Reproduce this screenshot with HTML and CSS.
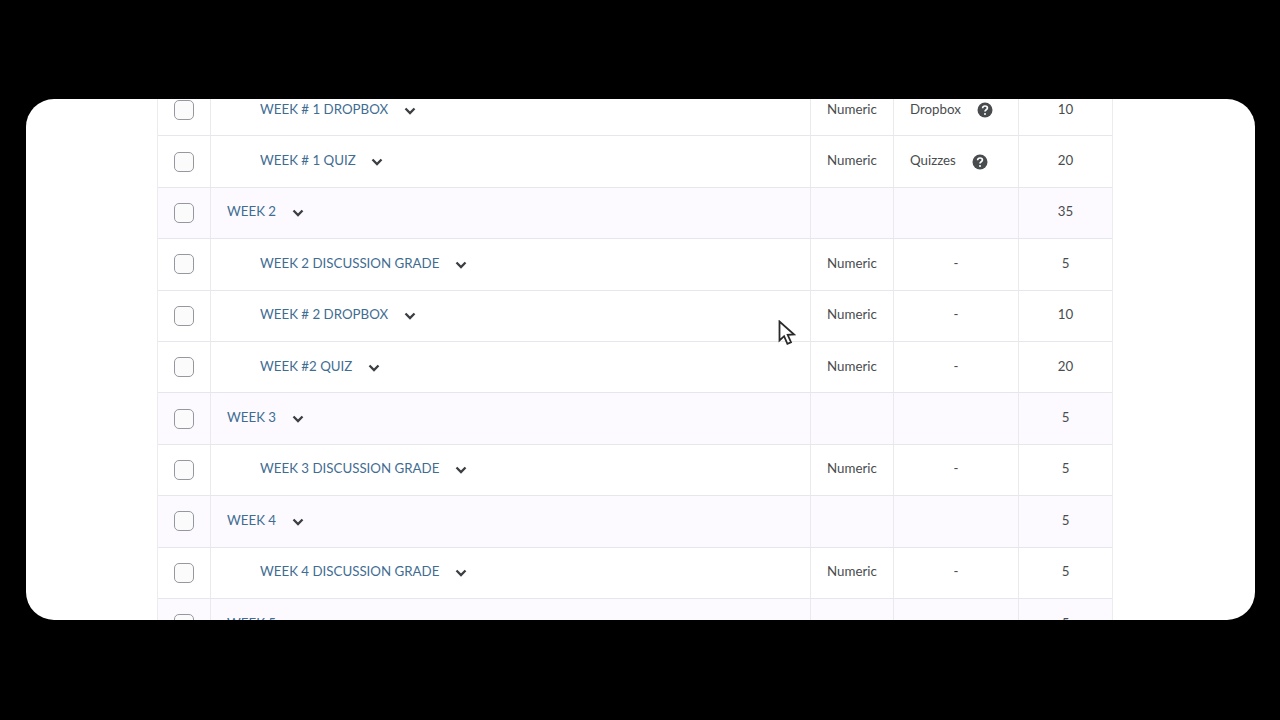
FILE: index.html
```html
<!DOCTYPE html>
<html lang="en">
<head>
<meta charset="utf-8">
<title>Grade items</title>
<link rel="stylesheet" href="styles.css">
</head>
<body>
<main class="card">
  <div class="table">
    <div class="row"><div class="c check"><span class="box"></span></div><div class="c name child"><a>WEEK # 1 DROPBOX</a><svg class="chev" viewBox="0 0 12 8"><path d="M1.5 1.5 6 6l4.5-4.5"/></svg></div><div class="c type">Numeric</div><div class="c cat"><span>Dropbox</span><svg class="help" viewBox="0 0 16 16"><circle cx="8" cy="8" r="7.5"/><path class="q" d="M5.6 6.2C5.7 4.8 6.7 4 8 4c1.4 0 2.4.9 2.4 2 0 1.8-2.4 1.8-2.4 3.6"/><circle class="dot" cx="8" cy="12" r="1"/></svg></div><div class="c max">10</div></div>
    <div class="row"><div class="c check"><span class="box"></span></div><div class="c name child"><a>WEEK # 1 QUIZ</a><svg class="chev" viewBox="0 0 12 8"><path d="M1.5 1.5 6 6l4.5-4.5"/></svg></div><div class="c type">Numeric</div><div class="c cat"><span>Quizzes</span><svg class="help" viewBox="0 0 16 16"><circle cx="8" cy="8" r="7.5"/><path class="q" d="M5.6 6.2C5.7 4.8 6.7 4 8 4c1.4 0 2.4.9 2.4 2 0 1.8-2.4 1.8-2.4 3.6"/><circle class="dot" cx="8" cy="12" r="1"/></svg></div><div class="c max">20</div></div>
    <div class="row group"><div class="c check"><span class="box"></span></div><div class="c name"><a>WEEK 2</a><svg class="chev" viewBox="0 0 12 8"><path d="M1.5 1.5 6 6l4.5-4.5"/></svg></div><div class="c type"></div><div class="c cat"></div><div class="c max">35</div></div>
    <div class="row"><div class="c check"><span class="box"></span></div><div class="c name child"><a>WEEK 2 DISCUSSION GRADE</a><svg class="chev" viewBox="0 0 12 8"><path d="M1.5 1.5 6 6l4.5-4.5"/></svg></div><div class="c type">Numeric</div><div class="c cat dash">-</div><div class="c max">5</div></div>
    <div class="row"><div class="c check"><span class="box"></span></div><div class="c name child"><a>WEEK # 2 DROPBOX</a><svg class="chev" viewBox="0 0 12 8"><path d="M1.5 1.5 6 6l4.5-4.5"/></svg></div><div class="c type">Numeric</div><div class="c cat dash">-</div><div class="c max">10</div></div>
    <div class="row"><div class="c check"><span class="box"></span></div><div class="c name child"><a>WEEK #2 QUIZ</a><svg class="chev" viewBox="0 0 12 8"><path d="M1.5 1.5 6 6l4.5-4.5"/></svg></div><div class="c type">Numeric</div><div class="c cat dash">-</div><div class="c max">20</div></div>
    <div class="row group"><div class="c check"><span class="box"></span></div><div class="c name"><a>WEEK 3</a><svg class="chev" viewBox="0 0 12 8"><path d="M1.5 1.5 6 6l4.5-4.5"/></svg></div><div class="c type"></div><div class="c cat"></div><div class="c max">5</div></div>
    <div class="row"><div class="c check"><span class="box"></span></div><div class="c name child"><a>WEEK 3 DISCUSSION GRADE</a><svg class="chev" viewBox="0 0 12 8"><path d="M1.5 1.5 6 6l4.5-4.5"/></svg></div><div class="c type">Numeric</div><div class="c cat dash">-</div><div class="c max">5</div></div>
    <div class="row group"><div class="c check"><span class="box"></span></div><div class="c name"><a>WEEK 4</a><svg class="chev" viewBox="0 0 12 8"><path d="M1.5 1.5 6 6l4.5-4.5"/></svg></div><div class="c type"></div><div class="c cat"></div><div class="c max">5</div></div>
    <div class="row"><div class="c check"><span class="box"></span></div><div class="c name child"><a>WEEK 4 DISCUSSION GRADE</a><svg class="chev" viewBox="0 0 12 8"><path d="M1.5 1.5 6 6l4.5-4.5"/></svg></div><div class="c type">Numeric</div><div class="c cat dash">-</div><div class="c max">5</div></div>
    <div class="row group"><div class="c check"><span class="box"></span></div><div class="c name"><a>WEEK 5</a></div><div class="c type"></div><div class="c cat"></div><div class="c max">5</div></div>
  </div>
  <svg class="cursor" viewBox="0 0 18 26"><path d="M1.5 1.5v19l4.6-4.3 3.3 7.6 3.6-1.6-3.3-7.4 6.2-.4z"/></svg>
</main>
</body>
</html>
```
FILE: styles.css
```css
* { box-sizing: border-box; }
html, body { margin: 0; height: 100%; background: #000; }
body { padding: 99px 25px 100px 26px; font-family: Lato, "Open Sans", sans-serif; font-size: 13.3px; color: #494c4e; overflow: hidden; }
.card { position: relative; height: 521px; background: #fff; border-radius: 28px; overflow: hidden; padding-left: 131px; }
.table { width: 956px; margin-top: -14px; border-left: 1px solid #ebebf0; border-right: 1px solid #ebebf0; }
.row { display: grid; grid-template-columns: 52px 600px 83px 125px 1fr; height: 51.4px; border-bottom: 1px solid #e6e7ec; }
.group { background: #fcfaff; }
.c { display: flex; align-items: center; min-width: 0; border-left: 1px solid #e9e9ee; padding-bottom: 3px; }
.c:first-child { border-left: 0; }
.check { justify-content: center; padding: 0; }
.box { width: 20px; height: 20px; border: 1px solid #95999e; border-radius: 5px; background: #fbfbfc; }
.name { padding-left: 16px; gap: 15px; }
.child { padding-left: 49px; }
.name a { color: #3f6d92; }
.chev { width: 12px; height: 8px; margin-left: 0.5px; margin-top: 4px; }
.chev path { fill: none; stroke: #3c3f42; stroke-width: 2.3; }
.type { padding-left: 16px; }
.cat { padding-left: 16px; gap: 16px; }
.dash { justify-content: center; padding-left: 0; }
.max { justify-content: center; }
.help { width: 16px; height: 16px; margin-top: 3px; }
.help circle { fill: #494c4e; }
.help .q { fill: none; stroke: #fff; stroke-width: 1.7; }
.help .dot { fill: #fff; }
.cursor { position: absolute; left: 752px; top: 221px; width: 18px; height: 26px; }
.cursor path { fill: #fff; stroke: #2a2a2a; stroke-width: 1.8; stroke-linejoin: miter; }
```
